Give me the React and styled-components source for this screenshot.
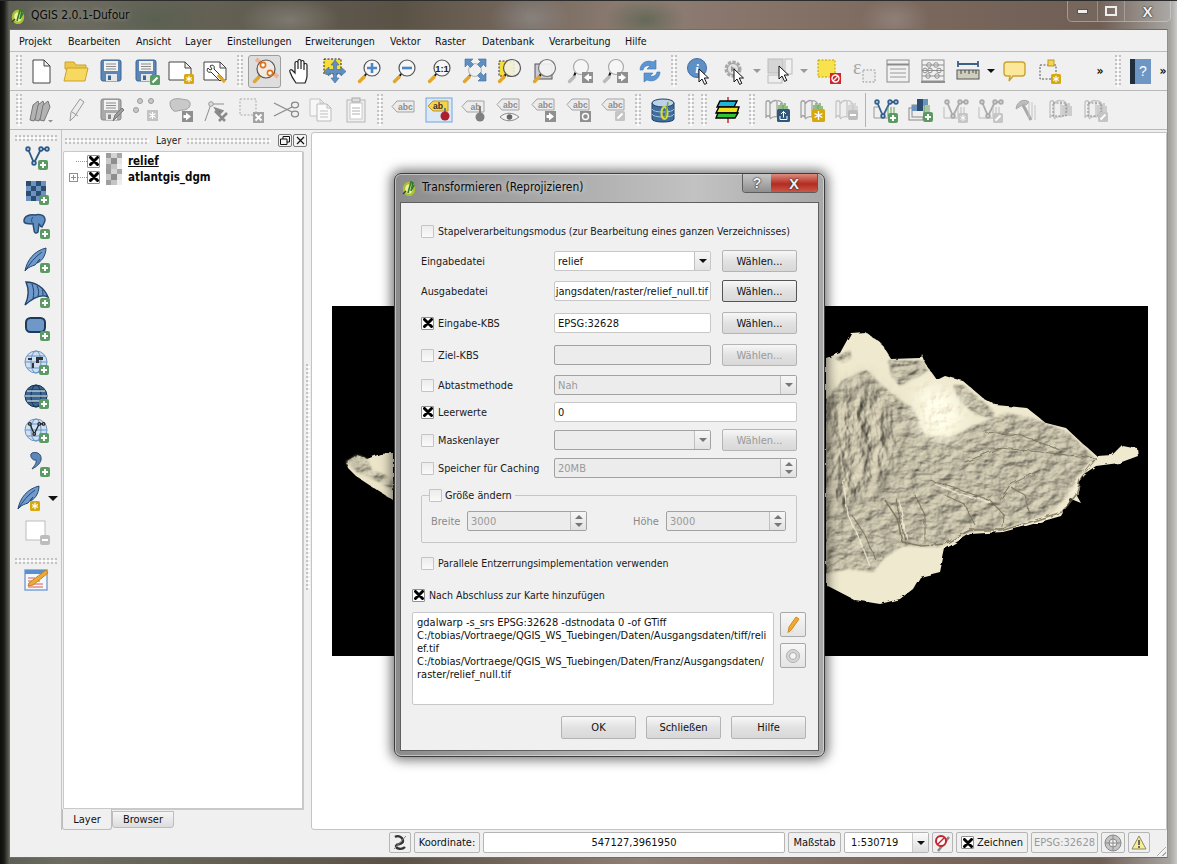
import React from "react";
import styled, { createGlobalStyle, css } from "styled-components";

const UI = '"DejaVu Sans Condensed", "Noto Sans", "Liberation Sans", sans-serif';

const Global = createGlobalStyle`
  html, body { margin: 0; padding: 0; background: #000; overflow: hidden; }
  * { box-sizing: border-box; }
`;

/* ---------- icon fragments ---------- */
const at = (x, y) => `translate(${x} ${y})`;
const Plus = ({ x = 18, y = 18 }) => (
  <g transform={at(x, y)}><rect width="10" height="10" rx="2" fill="#5c9a63" /><path d="M5 2v6M2 5h6" stroke="#fff" strokeWidth="2" /></g>
);
const Star = ({ x = 18, y = 18 }) => (
  <g transform={at(x, y)}><rect width="10" height="10" rx="1.5" fill="#d7a90e" /><path d="M5 1.8v6.4M2.2 3.4l5.600 3.2M2.2 6.6l5.600-3.2" stroke="#fff" strokeWidth="1.2" /></g>
);
const Minus = ({ x = 18, y = 18 }) => (
  <g transform={at(x, y)}><rect width="10" height="10" rx="2" fill="#bdbdbd" /><path d="M2 5h6" stroke="#fff" strokeWidth="2" /></g>
);
const Pen = ({ x = 18, y = 18, c = "#5c9a63" }) => (
  <g transform={at(x, y)}><rect width="10" height="10" rx="1.5" fill={c} /><path d="M2.5 7.5L7.5 2.5" stroke="#fff" strokeWidth="2" /></g>
);
const Arr = ({ x = 18, y = 18, left }) => (
  <g transform={at(x, y)}><rect width="11" height="11" fill="#8f8f8f" /><path d={left ? "M2 5.5L7 1.5v2.5h2.5v3H7v2.5z" : "M9 5.5L4 1.5v2.5H1.5v3H4v2.5z"} fill="#fff" /></g>
);
const Cursor = ({ x, y }) => (
  <path transform={at(x, y)} d="M0 0v13l3-3 2.6 5.4 2.2-1L5.3 9H9.5z" fill="#fff" stroke="#111" strokeWidth="1" />
);
const Lens = ({ cx = 16, cy = 11, r = 8, fill = "#f6f6f6", line = "#555", hand = "#e2a62c", children }) => (
  <g>
    <path d={`M${cx - r * 0.72} ${cy + r * 0.72}L7.5 20.5`} stroke="#111" strokeWidth="2" />
    <path d="M8 20L3.5 24.5" stroke={hand} strokeWidth="3.4" strokeLinecap="round" />
    <circle cx={cx} cy={cy} r={r} fill={fill} stroke={line} strokeWidth="1.2" />
    {children}
  </g>
);
const Tag = ({ t = "abc", y = 5 }) => (
  <g>
    <path d={`M7 ${y}h17v11H7l-5-5.5z`} fill="#ececec" stroke="#a3a3a3" />
    <text x="15.5" y={y + 8.6} fontFamily="'Liberation Sans',sans-serif" fontWeight="700" fontSize="8.6" textAnchor="middle" fill="#8d8d8d">{t}</text>
  </g>
);
const MapBase = ({ c = "#9f9f9f", g = "#5ea24f" }) => (
  <g fill="none">
    <path d="M3 7c0-3 4-3 4 0v15c0-3-4-3-4 0zM7 8c3-4 5-4 7-3v16c-3-1-5 0-7 2M14 5c2-1 4 0 6 3v8" stroke={c} strokeWidth="1.3" fill="#efefef" />
    <path d="M16 20V9M18 20V7M20 20V9M22 20V7M24 20V10" stroke={g} strokeWidth="1.3" />
  </g>
);
const Feather = ({ c = "#6f9acb", l = "#244a73" }) => (
  <g><path d="M3 25C5 14 12 5 24 2c0 8-5 14-9 15l3-4-5 6c-3 1-6 2-8 4z" fill={c} stroke={l} strokeWidth="1" /><path d="M3 25C8 17 13 11 20 6" stroke={l} strokeWidth="1" fill="none" /></g>
);
const Globe = ({ c = "#cfe0f2", l = "#6d95c4" }) => (
  <g fill="none" stroke={l}><circle cx="12" cy="12" r="11" fill={c} /><ellipse cx="12" cy="12" rx="5" ry="11" /><path d="M1 12h22M3 6h18M3 18h18" /></g>
);
const Floppy = ({ c = "#5b87b8", l = "#3c6690" }) => (
  <g>
    <rect x="4" y="3" width="20" height="21" rx="2" fill={c} stroke={l} />
    <rect x="7" y="4" width="14" height="10" fill="#f2f2f2" />
    <path d="M9 7h10M9 9.5h10M9 12h10" stroke="#8a8a8a" />
    <rect x="9" y="17" width="11" height="7" fill="#e6e6e6" /><rect x="11" y="18.5" width="3" height="4.5" fill={l} />
  </g>
);
const Doc = ({ x = 5, y = 3, w = 18, h = 22, f = 6, fill = "#fff", line = "#444" }) => (
  <path d={`M${x} ${y}h${w - f}l${f} ${f}v${h - f}h-${w}z M${x + w - f} ${y}v${f}h${f}`} fill={fill} stroke={line} />
);
const Vee = ({ c = "#2e5a87" }) => (
  <g fill="none" stroke={c} strokeWidth="1.8"><path d="M4 4l6 14L17 4h6" /><circle cx="4" cy="4" r="1.8" fill="#cfdff0" /><circle cx="17" cy="4" r="1.8" fill="#cfdff0" /><circle cx="23" cy="4" r="1.8" fill="#cfdff0" /><circle cx="10" cy="18" r="1.8" fill="#cfdff0" /></g>
);
const Check = () => (
  <g>
    {[[0,0,"#2b4d72"],[5,0,"#6c93c0"],[10,0,"#2b4d72"],[15,0,"#6c93c0"],[0,5,"#6c93c0"],[5,5,"#2b4d72"],[10,5,"#6c93c0"],[15,5,"#2b4d72"],[0,10,"#2b4d72"],[5,10,"#6c93c0"],[10,10,"#2b4d72"],[15,10,"#6c93c0"],[0,15,"#6c93c0"],[5,15,"#2b4d72"],[10,15,"#6c93c0"]].map(([x,y,c],i)=>(
      <rect key={i} x={x+4} y={y+3} width="5" height="5" fill={c} />
    ))}
  </g>
);
const Dash = ({ x = 4, y = 4, w = 15, h = 15, fill = "#ededed", line = "#999" }) => (
  <rect x={x} y={y} width={w} height={h} fill={fill} stroke={line} strokeDasharray="2 1.5" />
);

const icons = {
  new: <Doc x={6} y={3} w={17} h={23} />,
  open: <g><path d="M3 8V5h9l2 3h10v4H3z" fill="#eec64a" stroke="#c9a32f" /><path d="M5 11h21l-3 13H2z" fill="#f7d95f" stroke="#c9a32f" /></g>,
  save: <Floppy />,
  saveas: <g><Floppy /><Pen x={18} y={18} /></g>,
  newprint: <g><Doc x={2} y={5} w={22} h={18} /><Star x={17} y={17} /></g>,
  composer: <g><Doc x={2} y={5} w={22} h={18} /><path d="M8 9c3-2 5 0 4 3l9 9-3 3-9-9c-3 1-5-1-3-4l2 2 2-1z" fill="#fff" stroke="#333" /><path d="M16 18l7 7" stroke="#e2a62c" strokeWidth="3.2" /></g>,
  selzoom: <g><path d="M16 11L5 2M16 11l11 9" stroke="#eeb491" strokeWidth="4" /><Lens cx={15} cy={12} r={9} fill="#f2e9e3" /><circle cx="12" cy="8" r="2.6" fill="#fff" stroke="#e2731c" strokeWidth="1.6" /><circle cx="19" cy="16" r="2.6" fill="#fff" stroke="#e2731c" strokeWidth="1.6" /></g>,
  hand: <path d="M10 26C7 22 5 18 4 15c-1-2 1-3 2-2l3 3V6c0-2 3-2 3 0v6V4c0-2 3-2 3 0v8V5c0-2 3-2 3 0v8V8c0-2 3-2 3 0v11c0 3-1 4-2 7z" fill="#fff" stroke="#222" strokeWidth="1.2" />,
  pan: <g><Dash x={3} y={2} w={17} h={15} fill="#f6dd3a" line="#222" /><path d="M14 3l4 5h-2.500v4.500H20V10l5 4.500-5 4.500v-2.500h-4.500V21H18l-4 5-4-5h2.500v-4.500H8V19l-5-4.500L8 10v2.500h4.500V8H10z" fill="#5f8fc2" stroke="#3e6a9b" strokeWidth=".6" /></g>,
  zoomin: <Lens><path d="M16 6v10M11 11h10" stroke="#4c86c4" strokeWidth="2.6" /></Lens>,
  zoomout: <Lens><path d="M11 11h10" stroke="#4c86c4" strokeWidth="2.6" /></Lens>,
  zoom11: <Lens><text x="16" y="14.5" fontSize="9.5" fontWeight="700" textAnchor="middle" fill="#222" fontFamily="'Liberation Sans',sans-serif">1:1</text></Lens>,
  zoomfull: <g><Lens cx={14} cy={13} r={6.5} fill="#f0f0f0" line="#bbb" /><path d="M4 2h8L9.500 4.500l3 3-3 3-3-3L4 10zM25 2v8l-2.500-2.500-3 3-3-3 3-3L17 2zM25 24h-8l2.500-2.500-3-3 3-3 3 3L25 16z" fill="#5f8fc2" stroke="#3e6a9b" strokeWidth=".6" /></g>,
  zoomsel: <g><Dash x={3} y={4} w={15} h={15} fill="#f6dd3a" line="#333" /><Lens cx={16} cy={11} r={8.5} fill="rgba(240,240,230,.88)" /></g>,
  zoomlayer: <g><rect x="4" y="7" width="17" height="15" fill="#cfc9d6" stroke="#555" /><Lens cx={16} cy={11} r={8.5} fill="rgba(244,244,244,.9)" line="#777" /></g>,
  zoomlast: <g><Lens cx={15} cy={10} r={7.5} fill="#f6f6f6" line="#aaa" hand="#bbb" /><Arr x={16} y={15} left /></g>,
  zoomnext: <g><Lens cx={15} cy={10} r={7.5} fill="#f6f6f6" line="#aaa" hand="#bbb" /><Arr x={16} y={15} /></g>,
  refresh: <g fill="#5b96d3" stroke="#3f77b3" strokeWidth=".6"><path d="M4 13c0-6 6-11 13-8l3-2v9h-9l3-3c-3-1-6 0-7 4z" /><path d="M24 15c0 6-6 11-13 8l-3 2v-9h9l-3 3c3 1 6 0 7-4z" /></g>,
  identify: <g><circle cx="12" cy="11" r="9.500" fill="#5e8fc5" stroke="#3f6c9f" /><text x="12" y="16" fontSize="13" fontStyle="italic" fontWeight="700" fill="#fff" textAnchor="middle" fontFamily="'Liberation Serif',serif">i</text><Cursor x={14} y={12} /></g>,
  gear: <g><circle cx="13" cy="12" r="7" fill="#d8d8d8" stroke="#a8a8a8" strokeWidth="3" strokeDasharray="3.200 1.400" /><circle cx="13" cy="12" r="5.500" fill="#e3e3e3" stroke="#9e9e9e" /><path d="M11 9l5 3-5 3z" fill="#9a9a9a" /><Cursor x={14} y={12} /></g>,
  select: <g><rect x="2" y="2" width="15" height="14" fill="#d5d5d5" stroke="#bbb" /><rect x="19" y="2" width="7" height="15" fill="#f0f0f0" stroke="#bbb" /><rect x="2" y="18" width="14" height="8" fill="#eee" stroke="#bbb" /><Cursor x={13} y={9} /></g>,
  deselect: <g><Dash x={4} y={3} w={17} h={17} fill="#f8e34f" line="#b69a25" /><rect x="16" y="16" width="11" height="11" fill="#d0262b" /><circle cx="21.500" cy="21.500" r="3.500" fill="none" stroke="#fff" strokeWidth="1.400" /><path d="M19 24l5-5" stroke="#fff" strokeWidth="1.300" /></g>,
  eps: <g><text x="4" y="17" fontSize="20" fill="#a5a5a5" fontFamily="'Liberation Serif',serif">ε</text><Dash x={14} y={13} w={12} h={12} /></g>,
  table: <g><rect x="3" y="3" width="22" height="22" fill="#f1f1f1" stroke="#8b8b8b" /><path d="M3 7.500h22" stroke="#8b8b8b" strokeWidth="2" /><path d="M6 12h16M6 16h16M6 20h16" stroke="#9a9a9a" /></g>,
  abacus: <g fill="none" stroke="#8f8f8f"><rect x="3" y="3" width="22" height="21" fill="#f1f1f1" /><path d="M3 8h22M3 13.500h22M3 19h22" /><circle cx="10" cy="8" r="2.300" /><circle cx="17" cy="8" r="2.300" /><circle cx="6" cy="13.500" r="2.300" /><circle cx="11" cy="13.500" r="2.300" /><circle cx="20" cy="13.500" r="2.300" /><circle cx="9" cy="19" r="2.300" /><circle cx="18" cy="19" r="2.300" /><path d="M2 25h24" strokeWidth="2" /></g>,
  ruler: <g><path d="M4 7h20M4 4v6M24 4v6" stroke="#3d6184" strokeWidth="1.800" /><rect x="3" y="13" width="22" height="9" fill="#cfcdbf" stroke="#555" /><path d="M7 13v4M11 13v3M15 13v4M19 13v3M22 13v4" stroke="#444" /></g>,
  tip: <path d="M7 5h15c2 0 3 1 3 3v8c0 2-1 3-3 3H13l-4 5 1-5H7c-2 0-3-1-3-3V8c0-2 1-3 3-3z" fill="#fbe89a" stroke="#c9a32f" strokeWidth="1.400" />,
  annot: <g><Dash x={5} y={8} w={16} h={14} fill="none" line="#555" /><rect x="13" y="3" width="6" height="6" fill="#f5d34a" stroke="#b89a2a" /><Star x={16} y={17} /></g>,
  help: <g><rect x="4" y="2" width="21" height="25" fill="#6d96c5" /><rect x="4" y="2" width="5" height="25" fill="#1f2f40" /><text x="17" y="19" fontSize="14" fill="#fff" textAnchor="middle" fontFamily="'Liberation Sans',sans-serif">?</text></g>,

  pencils: <g stroke="#777" fill="#b3b3b3"><path d="M3 24L6 9l5-4 2 6-6 14z" /><path d="M8 24L11 9l5-4 2 6-6 14z" /><path d="M13 24l3-15 5-4 2 6-6 14z" /><path d="M21 24h5l-2.500 2.500z" stroke="none" fill="#8f8f8f" /></g>,
  pencil: <g stroke="#9a9a9a" fill="#ececec"><path d="M8 25l1-9L18 3l4 3-9 14z" /><path d="M10 16l6 4" fill="none" /></g>,
  savegray: <g><Floppy c="#aaa" l="#888" /><path d="M16 25l2-6 7-7 2 2-7 7z" fill="#9e9e9e" stroke="#777" /></g>,
  points: <g><circle cx="8" cy="5" r="2.500" fill="#c9c9c9" stroke="#999" /><circle cx="19" cy="5" r="2.500" fill="#c9c9c9" stroke="#999" /><circle cx="4" cy="14" r="2.500" fill="#c9c9c9" stroke="#999" /><rect x="15" y="14" width="11" height="11" fill="#c3c3c3" /><path d="M20.500 16v7M17.500 17.500l6 4M17.500 21.500l6-4" stroke="#fff" strokeWidth="1.200" /></g>,
  shape: <g><path d="M3 7c0-4 7-5 11-4s8 0 9 4-3 7-7 7-7 2-9 1-4-4-4-8z" fill="#c9c9c9" stroke="#9f9f9f" /><Arr x={15} y={15} /></g>,
  nodetool: <g><path d="M3 25L9 8M9 8h13" stroke="#8f8f8f" /><circle cx="9" cy="8" r="2.300" fill="#ddd" stroke="#999" /><path d="M13 15l10 10M17 25l8-8M14 13l6 2-3 3z" stroke="#8a8a8a" strokeWidth="2.500" /></g>,
  dashx: <g><Dash x={3} y={3} w={16} h={16} fill="#eee" line="#aaa" /><rect x="16" y="16" width="11" height="11" fill="#a3a3a3" /><path d="M18.500 18.500l6 6M24.500 18.500l-6 6" stroke="#fff" strokeWidth="2" /></g>,
  scissors: <g fill="none" stroke="#8a8a8a" strokeWidth="1.300"><path d="M2 7l18 9M2 20L20 11" /><ellipse cx="23" cy="9" rx="3.500" ry="2.800" /><ellipse cx="23" cy="18" rx="3.500" ry="2.800" /></g>,
  copy: <g><Doc x={3} y={3} w={14} h={17} f={4} fill="#f7f7f7" line="#c4c4c4" /><Doc x={10} y={8} w={14} h={17} f={4} fill="#fafafa" line="#bbb" /><path d="M13 15h8M13 18h8M13 21h8" stroke="#c0c0c0" /></g>,
  clip: <g><rect x="5" y="4" width="18" height="22" fill="#eee" stroke="#b5b5b5" /><rect x="8" y="7" width="12" height="16" fill="#fff" stroke="#c8c8c8" /><rect x="10" y="2" width="8" height="4" fill="#ddd" stroke="#aaa" /><path d="M10 12h8M10 15h8M10 18h8" stroke="#b0b0b0" /></g>,
  abc: <Tag />,
  abpin: <g><rect x="1" y="2" width="26" height="24" fill="#dce8f5" stroke="#6ea6e0" /><path d="M8 5h15v10H8l-5-5z" fill="#f6d44a" stroke="#b89a2a" /><text x="13" y="13" fontSize="8.600" fontWeight="700" textAnchor="middle" fill="#333" fontFamily="'Liberation Sans',sans-serif">ab</text><path d="M20 12v6" stroke="#777" strokeWidth="2" /><circle cx="20" cy="20" r="4.500" fill="#ad1f2c" /></g>,
  abgray: <g><Tag t="ab" /><path d="M20 10v8" stroke="#777" strokeWidth="1.800" /><circle cx="20" cy="21" r="4.500" fill="#7f7f7f" /></g>,
  abceye: <g><Tag y={3} /><path d="M5 21c5-5 13-5 19 0-6 5-14 5-19 0z" fill="#f4f4f4" stroke="#888" /><circle cx="14.500" cy="21" r="2.800" fill="#666" /></g>,
  abcarrow: <g><Tag y={3} /><Arr x={15} y={15} /></g>,
  abcrot: <g><Tag y={3} /><rect x="15" y="15" width="11" height="11" fill="#8f8f8f" /><circle cx="20.500" cy="20.500" r="3" fill="none" stroke="#fff" strokeWidth="1.400" /></g>,
  abcpen: <g><Tag y={3} /><Pen x={15} y={15} c="#c4c4c4" /></g>,
  db: <g><path d="M3 7v16c0 4 22 4 22 0V7z" fill="#3f6d9f" stroke="#1f3f63" /><ellipse cx="14" cy="7" rx="11" ry="4" fill="#bcd2e8" stroke="#1f3f63" /><path d="M3 13c0 4 22 4 22 0M3 18c0 4 22 4 22 0" fill="none" stroke="#a8c3de" /><ellipse cx="15.500" cy="17" rx="3" ry="6" fill="none" stroke="#d7d83a" strokeWidth="2.200" /><path d="M16 22l3-16" stroke="#7fa82f" strokeWidth="1.600" /></g>,
  stack: <g><path d="M14 1v26" stroke="#d6262a" strokeWidth="1.500" /><path d="M6 5h17l-3 6H3z" fill="#1fb5d6" stroke="#000" strokeWidth="1.400" /><path d="M5 11h20l-2 6H2z" fill="#eee21f" stroke="#000" strokeWidth="1.400" /><path d="M4 17h20l-3 5H2z" fill="#2fc23a" stroke="#000" strokeWidth="1.400" /></g>,
  mapup: <g><MapBase c="#a4a4a4" /><rect x="14" y="13" width="13" height="13" rx="1.500" fill="#30587d" /><path d="M20.500 15.500v6M18 18l2.500-2.500L23 18M17 20v3.500h7V20" stroke="#fff" fill="none" /></g>,
  mapstar: <g><MapBase c="#a4a4a4" /><rect x="14" y="13" width="13" height="13" rx="1.500" fill="#d7a90e" /><path d="M20.500 15v9M16.500 17.500l8 4M16.500 21.500l8-4" stroke="#fff" strokeWidth="1.300" /></g>,
  mapminus: <g><MapBase c="#c6c6c6" g="#c8c8c8" /><Minus x={15} y={14} /></g>,
  mapplus: <g transform="translate(1 2)"><path d="M1 20V9h4" stroke="#999" fill="none" /><path d="M1 20h14" stroke="#999" /><Vee c="#38628c" /><path d="M15 9V19M18 9V19M21 9V19" stroke="#5ea24f" /><Plus x={15} y={15} /></g>,
  rasterplus: <g><rect x="2" y="12" width="14" height="12" fill="#f0f0f0" stroke="#888" /><rect x="5" y="9" width="13" height="12" fill="#eee" stroke="#888" /><rect x="10" y="3" width="6" height="6" fill="#2b4d72" /><rect x="16" y="3" width="5" height="6" fill="#6c93c0" /><rect x="5" y="9" width="5" height="6" fill="#6c93c0" /><rect x="10" y="9" width="6" height="6" fill="#2b4d72" /><path d="M17 9v11M20 9v11M22 9v11" stroke="#5ea24f" /><Plus x={16} y={16} /></g>,
  nodegray: <g transform="translate(1 2)"><path d="M1 20V9M1 20h14" stroke="#bbb" /><Vee c="#aaa" /><path d="M15 9V19M18 9V19M21 9V19" stroke="#bbb" /><rect x="15" y="15" width="10" height="10" rx="1.500" fill="#c6c6c6" /><path d="M20 17v6M17.500 18.500l5 3M17.500 21.500l5-3" stroke="#fff" /></g>,
  penmap: <g transform="translate(1 2)"><path d="M1 20V9M1 20h14" stroke="#bbb" /><Vee c="#aaa" /><path d="M15 9V19M18 9V19M21 9V19" stroke="#bbb" /><Pen x={15} y={15} c="#c6c6c6" /></g>,
  hammer: <g stroke="#a8a8a8" fill="none"><path d="M5 9c3-5 8-6 12-3l-3 3-2-1-8 5z" fill="#bdbdbd" /><path d="M11 9l8 15" strokeWidth="3" /><path d="M17 6v16M20 6v16M23 9v15" stroke="#c4c4c4" /></g>,
  mapdash: <g><MapBase c="#c2c2c2" g="#bbb" /><Dash x={6} y={7} w={13} h={13} fill="none" line="#888" /></g>,
  mappen: <g><MapBase c="#c2c2c2" g="#bbb" /><Dash x={6} y={7} w={13} h={13} fill="none" line="#888" /><Pen x={16} y={16} c="#c4c4c4" /></g>,

  lv: <g transform="translate(2 1)"><Vee /><Plus x={14} y={15} /></g>,
  lr: <g><Check /><Plus x={17} y={17} /></g>,
  lpg: <g><path d="M2 9C2 4 8 2 13 3c3-1 10-1 10 5 0 3-2 4-3 7-2 0-2-3-3-3l-1 8c-2 2-4 1-4-2l-1-6c-5 0-9 0-9-3z" fill="#5f8fc2" stroke="#2b4d72" strokeWidth="1.500" /><path d="M11 5c-2 2-2 6 1 7" stroke="#2b4d72" fill="none" /><Plus x={18} y={17} /></g>,
  lfeather: <g><Feather /><Plus x={18} y={17} /></g>,
  lsail: <g><path d="M3 25C7 17 7 9 4 2c9 0 18 5 22 15-6-3-15 1-23 8z" fill="#6f9acb" stroke="#1f4268" strokeWidth="1.400" /><path d="M10 4c2 5 2 10 1 15M15 6c2 4 2 7 1 10M20 10c1 2 1 4 1 5" stroke="#1f4268" fill="none" /><Plus x={18} y={18} /></g>,
  lrect: <g><rect x="4" y="4" width="19" height="14" rx="4.500" fill="#6f97c8" stroke="#1c3a5c" strokeWidth="2" /><Plus x={18} y={17} /></g>,
  lwms: <g transform="translate(2 2)"><Globe /><path d="M4 8h4v2H4zM12 7h7v3h-4v3h-3zM8 13h2v5H8z" fill="#333" /><Plus x={15} y={15} /></g>,
  lwcs: <g transform="translate(2 2)"><Globe c="#3a6694" l="#17324f" /><path d="M1 12h22M3 7h18M3 17h18" stroke="#fff" /><Plus x={15} y={15} /></g>,
  lwfs: <g transform="translate(2 2)"><Globe /><g transform="translate(3 3) scale(.72)"><Vee c="#222" /></g><Plus x={15} y={15} /></g>,
  lcomma: <g><path d="M10 3c6-2 10 2 9 7-1 4-5 7-9 9 2-3 5-6 4-9-4 1-7-5-4-7z" fill="#5b87ba" stroke="#2b4d72" /><Plus x={18} y={17} /></g>,
  lnew: <g><Feather /><Star x={15} y={17} /></g>,
  lrem: <g><rect x="4" y="3" width="19" height="19" fill="#fff" stroke="#bcbcbc" /><Minus x={18} y={17} /></g>,
  notes: <g><rect x="3" y="5" width="22" height="20" fill="#f4f7fb" stroke="#7ea4d2" strokeWidth="1.500" /><rect x="3" y="5" width="22" height="4" fill="#5b8fd0" /><path d="M6 13h7M6 16h12M6 19h15M6 22h15" stroke="#d65b5b" /><path d="M7 18L24 5l2 3-15 12-5 1z" fill="#eea936" stroke="#c78419" /></g>,
};

/* ---------- chrome ---------- */
const Window = styled.div`
  position: relative;
  width: 1177px;
  height: 864px;
  overflow: hidden;
  display: flex;
  flex-direction: column;
  background:
    radial-gradient(ellipse 60px 30px at 155px 20px, rgba(70, 90, 70, .4), transparent),
    radial-gradient(ellipse 50px 24px at 290px 20px, rgba(230, 230, 230, .22), transparent),
    radial-gradient(ellipse 40px 26px at 530px 18px, rgba(190, 210, 230, .22), transparent),
    radial-gradient(ellipse 40px 24px at 645px 20px, rgba(60, 85, 60, .5), transparent),
    radial-gradient(ellipse 34px 24px at 895px 20px, rgba(210, 210, 210, .22), transparent),
    linear-gradient(90deg, #0d0d0b 0, #1a1a17 4px, #5e5f55 9px, #6c6c60 60px, #5b5246 400px, #8f7e74 640px, #7c695e 900px, #6e5e54 1100px, #a7a4a0 1170px, #c9c9c9 1177px);
`;
const TitleBar = styled.header`
  height: 29px;
  flex: none;
  display: flex;
  align-items: flex-start;
  padding-left: 11px;
  border-top: 1px solid #2b2b2b;
`;
const LogoSvg = styled.svg`
  width: 15px;
  height: 16px;
  flex: none;
  margin-top: ${(p) => p.$mt || 7}px;
`;
const TitleText = styled.span`
  margin: 7px 0 0 5px;
  font: 12px ${UI};
  color: #0a0a0a;
  text-shadow: 0 0 5px rgba(255, 255, 255, .45);
`;
const CaptionGroup = styled.div`
  margin-left: auto;
  margin-right: 6px;
  display: flex;
  height: 21px;
  border: 1px solid rgba(230, 230, 230, .4);
  border-top: none;
  border-radius: 0 0 5px 5px;
  background: rgba(255, 255, 255, .05);
`;
const CaptionBtn = styled.span`
  width: ${(p) => p.$w}px;
  display: flex;
  align-items: center;
  justify-content: center;
  border-left: ${(p) => (p.$first ? "none" : "1px solid rgba(230,230,230,.32)")};
`;
const Client = styled.div`
  flex: 1;
  min-height: 0;
  margin: 0 9px 6px 9px;
  display: flex;
  flex-direction: column;
  background: #f0f0f0;
  border: 1px solid #6d6d6d;
  border-right-color: #8f8f8f;
`;
const MenuBar = styled.nav`
  height: 22px;
  flex: none;
  display: flex;
  align-items: center;
  padding-top: 1px;
  border-bottom: 1px solid #bdbdbd;
`;
const MenuItem = styled.span`
  font: 10.6px ${UI};
  color: #111;
  margin-left: ${(p) => p.$x}px;
  width: ${(p) => p.$w}px;
  flex: none;
`;
const Toolbar = styled.div`
  height: 39px;
  flex: none;
  display: flex;
  align-items: center;
  padding-left: 4px;
  border-bottom: 1px solid #b9b9b9;
`;
const Slot = styled.span`
  width: 35px;
  height: 38px;
  flex: none;
  display: flex;
  align-items: center;
  justify-content: center;
`;
const ActiveBtn = styled.span`
  width: 33px;
  height: 33px;
  display: flex;
  align-items: center;
  justify-content: center;
  background: #dedede;
  border: 1px solid #9d9d9d;
  border-radius: 3px;
`;
const IconSvg = styled.svg`
  width: 28px;
  height: 28px;
  flex: none;
  display: block;
`;
const dots = css`
  background-image: radial-gradient(circle at 1px 1px, #c4c4c4 1px, transparent 1.3px), radial-gradient(circle at 3px 3px, #fff 1px, transparent 1.3px);
  background-size: 4px 4px;
`;
const GripSlot = styled.span`
  width: ${(p) => p.$w}px;
  flex: none;
  display: flex;
  justify-content: center;
`;
const GripV = styled.i`
  display: block;
  width: 6px;
  height: 32px;
  ${dots}
`;
const Gap = styled.span`
  width: ${(p) => p.$w}px;
  flex: none;
`;
const DropSlot = styled.span`
  width: ${(p) => p.$w}px;
  flex: none;
  display: flex;
  justify-content: center;
`;
const Tri = styled.i`
  width: 0;
  height: 0;
  display: block;
  border-left: ${(p) => p.$s || 4}px solid transparent;
  border-right: ${(p) => p.$s || 4}px solid transparent;
  border-top: ${(p) => p.$s || 4}px solid ${(p) => p.$c || "#111"};
`;
const More = styled.span`
  width: 12px;
  flex: none;
  text-align: center;
  font: 700 12px ${UI};
  color: #111;
`;
const VLine = styled.span`
  width: 3px;
  height: 34px;
  flex: none;
  border-left: 1px solid #b3b3b3;
  margin-left: 1px;
`;

const Main = styled.div`
  flex: 1;
  min-height: 0;
  display: flex;
`;
const SideBar = styled.aside`
  width: 52px;
  flex: none;
  padding-top: 5px;
  display: flex;
  flex-direction: column;
  border-right: 1px solid #c4c4c4;
`;
const GripH = styled.i`
  display: block;
  height: 6px;
  width: 42px;
  margin: ${(p) => p.$m || "0 auto"};
  flex: none;
  ${dots}
`;
const SideSlot = styled.span`
  height: ${(p) => p.$h || 34}px;
  flex: none;
  display: flex;
  align-items: center;
  justify-content: ${(p) => (p.$drop ? "flex-start" : "center")};
  padding-left: ${(p) => (p.$drop ? "5px" : "0")};
  gap: 5px;
`;
const Dock = styled.section`
  width: 242px;
  flex: none;
  display: flex;
  flex-direction: column;
`;
const DockHead = styled.div`
  height: 21px;
  flex: none;
  display: flex;
  align-items: center;
  padding: 0 0 0 3px;
  gap: 7px;
`;
const GripFill = styled.i`
  display: block;
  height: 6px;
  width: ${(p) => p.$w}px;
  flex: none;
  ${dots}
`;
const DockTitle = styled.span`
  font: 10px ${UI};
  color: #222;
  width: 24px;
  text-align: center;
  flex: none;
`;
const DockBtn = styled.span`
  width: 14px;
  height: 13px;
  flex: none;
  margin-left: ${(p) => p.$ml ?? -6}px;
  border: 1px solid #777;
  border-radius: 2px;
  display: flex;
  align-items: center;
  justify-content: center;
  background: #f4f4f4;
`;
const Tree = styled.div`
  flex: 1;
  min-height: 0;
  margin-left: 1px;
  background: #fff;
  border: 1px solid #c9c9c9;
  border-width: 1px 2px 2px 1px;
  border-radius: 2px;
  padding-top: 1px;
`;
const TreeRow = styled.div`
  height: 16px;
  display: flex;
  align-items: center;
  padding-left: 5px;
`;
const TreeGuide = styled.span`
  width: 18px;
  flex: none;
  display: flex;
  align-items: center;
  color: #999;
`;
const Expander = styled.span`
  width: 9px;
  height: 9px;
  flex: none;
  border: 1px solid #8f8f8f;
  background: linear-gradient(#8f8f8f, #8f8f8f) center/5px 1px no-repeat, linear-gradient(#8f8f8f, #8f8f8f) center/1px 5px no-repeat, #fff;
`;
const Dotted = styled.span`
  flex: 1;
  border-top: 1px dotted #999;
`;
const TreeLabel = styled.span`
  font: 700 11.5px ${UI};
  color: #0a0a0a;
  margin-left: 6px;
  text-decoration: ${(p) => (p.$u ? "underline" : "none")};
`;
const RasterSwatch = styled.svg`
  width: 16px;
  height: 16px;
  flex: none;
  margin-left: 6px;
`;
const Tabs = styled.div`
  height: 21px;
  flex: none;
  display: flex;
  align-items: flex-start;
  border-top: 1px solid #c9c9c9;
  margin-top: -1px;
`;
const Tab = styled.span`
  font: 11px ${UI};
  color: #111;
  text-align: center;
  height: ${(p) => (p.$on ? 21 : 17)}px;
  width: ${(p) => (p.$on ? 50 : 62)}px;
  line-height: ${(p) => (p.$on ? 22 : 15)}px;
  margin-top: ${(p) => (p.$on ? -1 : 1)}px;
  background: ${(p) => (p.$on ? "#f0f0f0" : "linear-gradient(#f6f6f6, #dcdcdc)")};
  border: 1px solid #bdbdbd;
  border-top: ${(p) => (p.$on ? "none" : "1px solid #bdbdbd")};
  border-radius: 0 0 3px 3px;
`;
const Splitter = styled.div`
  width: 7px;
  flex: none;
  display: flex;
  align-items: flex-start;
  justify-content: center;
  padding-top: 234px;
`;
const SplitDots = styled.i`
  display: block;
  width: 4px;
  height: 226px;
  ${dots}
`;
const MapCanvas = styled.main`
  flex: 1;
  min-width: 0;
  margin-top: 2px;
  background: #fff;
  border: 1px solid #c4c4c4;
  border-radius: 3px 0 0 3px;
  display: flex;
  align-items: center;
  justify-content: center;
`;
const Raster = styled.div`
  width: 816px;
  height: 350px;
  margin-left: 1px;
  background: #000;
  flex: none;
`;
const RasterSvg = styled.svg`
  width: 816px;
  height: 350px;
  display: block;
`;
const StatusBar = styled.footer`
  height: 27px;
  flex: none;
  display: flex;
  justify-content: flex-end;
  align-items: flex-start;
  gap: 3px;
  padding: 2px 17px 0 0;
  position: relative;
`;
const Stat = styled.span`
  width: ${(p) => p.$w}px;
  height: 21px;
  flex: none;
  display: flex;
  align-items: center;
  justify-content: ${(p) => p.$j || "center"};
  gap: 3px;
  font: 11px ${UI};
  color: ${(p) => p.$c || "#111"};
  background: ${(p) => p.$bg || "#f0f0f0"};
  border: 1px solid #b5b5b5;
  border-radius: 2px;
  padding: ${(p) => p.$p || 0};
`;
const ComboTail = styled.span`
  margin-left: auto;
  width: 16px;
  height: 100%;
  display: flex;
  align-items: center;
  justify-content: center;
  border-left: 1px solid #c8c8c8;
  background: linear-gradient(#fbfbfb, #dedede);
`;
const ResizeGrip = styled.span`
  position: absolute;
  right: 1px;
  bottom: 1px;
  width: 12px;
  height: 12px;
  background: repeating-linear-gradient(135deg, transparent 0 2px, #a8a8a8 2px 3px, #fff 3px 4px);
  clip-path: polygon(100% 0, 100% 100%, 0 100%);
`;
const CaptionGlyph = styled.span`
  font: 700 ${(p) => p.$s || 13}px "Liberation Sans", sans-serif;
  color: #f2f2f2;
  text-shadow: 0 0 2px #222, 0 0 1px #222;
`;

/* ---------- dialog ---------- */
const Dialog = styled.div`
  position: absolute;
  left: 394px;
  top: 173px;
  width: 431px;
  height: 584px;
  display: flex;
  flex-direction: column;
  border: 1px solid #3d3d3d;
  border-radius: 7px;
  background: linear-gradient(90deg, #8b8b8b 0, #a9a9a9 35%, #c2c2c2 70%, #a8a8a8 100%);
  box-shadow: 0 0 12px 3px rgba(0, 0, 0, .55), inset 0 0 0 1px rgba(255, 255, 255, .45);
`;
const DialogTitle = styled.div`
  height: 28px;
  flex: none;
  display: flex;
  align-items: flex-start;
  padding-left: 7px;
`;
const DialogTitleText = styled.span`
  margin: 6px 0 0 5px;
  font: 11.9px ${UI};
  color: #0a0a0a;
  text-shadow: 0 0 6px rgba(255, 255, 255, .9);
`;
const DlgButtons = styled.div`
  margin-left: auto;
  margin-right: 6px;
  display: flex;
  height: 19px;
  border: 1px solid rgba(70, 70, 70, .8);
  border-top: none;
  border-radius: 0 0 4px 4px;
  overflow: hidden;
`;
const DlgBtn = styled.span`
  width: ${(p) => p.$w}px;
  display: flex;
  align-items: center;
  justify-content: center;
  background: ${(p) => p.$bg};
`;
const DialogBody = styled.div`
  flex: 1;
  min-height: 0;
  margin: 0 5px 5px 5px;
  background: #f0f0f0;
  border: 1px solid #5f5f5f;
  padding-top: 17px;
  display: flex;
  flex-direction: column;
`;
const Form = styled.div`
  padding: 0 21px 0 20px;
`;
const Row = styled.div`
  display: grid;
  grid-template-columns: 133px 1fr;
  align-items: center;
  height: 22px;
  margin-top: ${(p) => p.$mt || 0}px;
  font: 10.8px ${UI};
  color: #1a1a1a;
`;
const FullRow = styled.div`
  display: flex;
  align-items: center;
  gap: 4px;
  height: 22px;
  white-space: nowrap;
  margin-top: ${(p) => p.$mt || 0}px;
  font: 10.5px ${UI};
  color: #1a1a1a;
`;
const CheckLabel = styled.label`
  display: flex;
  align-items: center;
  gap: 4px;
`;
const CheckBox = styled.span`
  width: 13px;
  height: 13px;
  flex: none;
  border: 1px solid ${(p) => (p.$on ? "#8f8f8f" : "#c4c4c4")};
  border-radius: 1px;
  background: ${(p) => (p.$on ? "#fff" : "linear-gradient(#ececec, #fafafa)")};
  display: flex;
  align-items: center;
  justify-content: center;
`;
const Cell = styled.div`
  display: flex;
  align-items: center;
  gap: 11px;
`;
const Field = styled.div`
  flex: 1;
  min-width: 0;
  height: 20px;
  display: flex;
  align-items: center;
  overflow: hidden;
  padding-left: ${(p) => p.$pl ?? 3}px;
  font: 11px ${UI};
  white-space: nowrap;
  color: ${(p) => (p.$off ? "#9a9a9a" : "#111")};
  background: ${(p) => (p.$off ? "#ececec" : "#fff")};
  border: 1px solid ${(p) => (p.$off ? "#a2a2a2" : "#c8c8c8")};
  border-radius: 2px;
`;
const RightText = styled.span`
  margin-left: auto;
  padding-right: 2px;
`;
const ArrowBox = styled.span`
  margin-left: auto;
  width: 16px;
  height: 100%;
  flex: none;
  display: flex;
  align-items: center;
  justify-content: center;
  border-left: 1px solid #c0c0c0;
  background: linear-gradient(#f7f7f7, #e2e2e2);
`;
const SpinBox = styled.span`
  margin-left: auto;
  width: 16px;
  height: 100%;
  flex: none;
  display: flex;
  flex-direction: column;
  align-items: center;
  justify-content: space-evenly;
  border-left: 1px solid #c0c0c0;
  background: linear-gradient(#f7f7f7, #e2e2e2);
`;
const TriUp = styled(Tri)`
  transform: rotate(180deg);
`;
const PushBtn = styled.button`
  width: ${(p) => p.$w || 75}px;
  height: ${(p) => p.$h || 22}px;
  flex: none;
  padding: 0;
  display: flex;
  align-items: center;
  justify-content: center;
  font: 11px ${UI};
  color: ${(p) => (p.$off ? "#9a9a9a" : "#111")};
  background: linear-gradient(#f7f7f7, #e2e2e2 50%, #d8d8d8);
  border: 1px solid ${(p) => (p.$def ? "#555" : "#b4b4b4")};
  border-radius: 2px;
`;
const Group = styled.fieldset`
  margin: 10px 0 0;
  padding: 0 10px 0 9px;
  height: 54px;
  display: block;
  border: 1px solid #c6c6c6;
  border-radius: 2px;
`;
const Legend = styled.legend`
  display: flex;
  align-items: center;
  gap: 3px;
  padding: 0 3px 0 0;
  margin-left: -2px;
  font: 10.8px ${UI};
  color: #1a1a1a;
  height: 13px;
`;
const GroupRow = styled.div`
  display: flex;
  align-items: center;
  height: 20px;
  margin-top: 9px;
  font: 11px ${UI};
  color: #8a8a8a;
`;
const GroupLabel = styled.span`
  width: ${(p) => p.$w}px;
  flex: none;
`;
const SmallSpin = styled(Field)`
  flex: none;
  width: 120px;
`;
const Lower = styled.div`
  padding: 0 12px 0 11px;
`;
const ConsoleRow = styled.div`
  margin-top: 6px;
  display: flex;
  gap: 6px;
`;
const Console = styled.div`
  width: 362px;
  height: 93px;
  flex: none;
  background: #fff;
  border: 1px solid #c8c8c8;
  border-radius: 2px;
  padding: 3px 0 0 4px;
  font: 11px/13px ${UI};
  color: #111;
  white-space: pre;
`;
const ConsoleSide = styled.div`
  display: flex;
  flex-direction: column;
  gap: 6px;
`;
const SideBtn = styled.span`
  width: 26px;
  height: 25px;
  display: flex;
  align-items: center;
  justify-content: center;
  background: linear-gradient(#f7f7f7, #e4e4e4);
  border: 1px solid #a8a8a8;
  border-radius: 2px;
`;
const BtnBar = styled.div`
  margin-top: 11px;
  display: flex;
  justify-content: flex-end;
  gap: 10px;
`;

/* ---------- small composites ---------- */
const Icon = ({ n }) => <IconSvg viewBox="0 0 28 28">{icons[n]}</IconSvg>;

const Logo = ({ mt }) => (
  <LogoSvg viewBox="0 0 15 16" $mt={mt}>
    <ellipse cx="7" cy="9" rx="5" ry="6" fill="#f2ef9c" stroke="#a9c234" strokeWidth="2.400" />
    <path d="M6 13l3-11 2 1-2 8 3-6" stroke="#2f7d2c" strokeWidth="1.600" fill="none" />
    <path d="M1 14l3-3" stroke="#3c3c20" strokeWidth="1.300" />
  </LogoSvg>
);
const XMark = () => (
  <svg width="10" height="10" viewBox="0 0 10 10"><path d="M1.500 1.500l7 7M8.500 1.500l-7 7" stroke="#000" strokeWidth="3" strokeLinecap="round" /></svg>
);
const Box = ({ on }) => <CheckBox $on={on}>{on && <XMark />}</CheckBox>;

const Bar = ({ items }) =>
  items.map((it, i) => {
    if (it[0] === "|") return <GripSlot key={i} $w={+it.slice(1)}><GripV /></GripSlot>;
    if (it[0] === "~") return <Gap key={i} $w={+it.slice(1)} />;
    if (it === ">") return <More key={i}>»</More>;
    if (it === "!") return <VLine key={i} />;
    if (it[0] === "v") return <DropSlot key={i} $w={+it.slice(1)}><Tri $c="#999" /></DropSlot>;
    if (it[0] === "V") return <DropSlot key={i} $w={+it.slice(1)}><Tri /></DropSlot>;
    if (it[0] === "*") return <Slot key={i}><ActiveBtn><Icon n={it.slice(1)} /></ActiveBtn></Slot>;
    return <Slot key={i}><Icon n={it} /></Slot>;
  });

const row1 = ["|9", "new", "open", "save", "saveas", "newprint", "composer", "|14", "*selzoom", "hand", "pan", "zoomin", "zoomout", "zoom11", "zoomfull", "zoomsel", "zoomlayer", "zoomlast", "zoomnext", "refresh", "|14", "identify", "gear", "v11", "select", "v13", "deselect", "eps", "table", "abacus", "ruler", "V11", "tip", "annot", "~28", ">", "~8", "|8", "help", ">"];
const row2 = ["|9", "pencils", "pencil", "savegray", "points", "shape", "nodetool", "dashx", "scissors", "copy", "clip", "|13", "abc", "abpin", "abgray", "abceye", "abcarrow", "abcrot", "abcpen", "|14", "db", "~4", "|13", "|13", "stack", "|14", "mapup", "mapstar", "mapminus", "!", "mapplus", "rasterplus", "nodegray", "penmap", "hammer", "mapdash", "mappen"];
const side = ["lv", "lr", "lpg", "lfeather", "lsail", "lrect", "lwms", "lwcs", "lwfs", "lcomma"];
const menus = [["Projekt", 9, 49], ["Bearbeiten", 0, 68], ["Ansicht", 0, 49], ["Layer", 0, 42], ["Einstellungen", 0, 78], ["Erweiterungen", 0, 85], ["Vektor", 0, 45], ["Raster", 0, 47], ["Datenbank", 0, 67], ["Verarbeitung", 0, 76], ["Hilfe", 0, 40]];

const Swatch = () => (
  <RasterSwatch viewBox="0 0 16 16">
    {[[0,0,"#9c9c9c"],[5,0,"#d4d4d4"],[11,0,"#a8a8a8"],[0,5,"#c9c9c9"],[5,5,"#8e8e8e"],[11,5,"#e4e4e4"],[0,11,"#a0a0a0"],[5,11,"#c4c4c4"],[11,11,"#eee"]].map(([x,y,c],i)=>(
      <rect key={i} x={x} y={y} width={x===5?6:5} height={y===5?6:5} fill={c} />
    ))}
  </RasterSwatch>
);

const outline = "M826 358L840 353L851 333L865 332L881 343L891 359L920 358L921 353L925 363L937 380L945 376L963 381L983 398L996 405L1027 408L1046 423L1066 428L1082 443L1097 456L1112 455L1122 445L1137 448L1138 456L1119 463L1096 466L1081 476L1077 496L1081 503L1071 499L1061 516L1026 526L1003 532L970 534L945 549L940 572L920 577L913 589L900 599L880 604L855 600L826 585Z";
const tan = "M826 400L843 380L866 370L883 386L900 400L913 408L925 435L950 438L973 426L1006 413L1032 418L1069 433L1096 459L1079 476L1067 496L1052 513L1003 529L969 532L939 547L921 547L903 546L886 556L873 572L847 569L826 574Z";

const Terrain = () => (
  <RasterSvg viewBox="332 306 816 350">
    <defs>
      <filter id="hs" x="-5%" y="-5%" width="110%" height="110%" colorInterpolationFilters="sRGB">
        <feTurbulence type="fractalNoise" baseFrequency="0.07 0.11" numOctaves="4" seed="7" result="n" />
        <feDiffuseLighting in="n" surfaceScale="2.400" diffuseConstant="1" lightingColor="#dcd5bc" result="l"><feDistantLight azimuth="225" elevation="60" /></feDiffuseLighting>
        <feGaussianBlur in="SourceAlpha" stdDeviation="1.200" result="a" />
        <feComposite in="l" in2="a" operator="in" />
      </filter>
      <filter id="hm" x="-25%" y="-25%" width="150%" height="150%" colorInterpolationFilters="sRGB">
        <feTurbulence type="fractalNoise" baseFrequency="0.06 0.035" numOctaves="4" seed="19" result="n" />
        <feDiffuseLighting in="n" surfaceScale="6" diffuseConstant="1.050" lightingColor="#dcd4ba" result="l"><feDistantLight azimuth="205" elevation="55" /></feDiffuseLighting>
        <feGaussianBlur in="SourceAlpha" stdDeviation="9" result="a" />
        <feComposite in="l" in2="a" operator="in" />
      </filter>
      <filter id="hp" x="-40%" y="-40%" width="180%" height="180%" colorInterpolationFilters="sRGB">
        <feTurbulence type="fractalNoise" baseFrequency="0.09" numOctaves="3" seed="3" result="n" />
        <feDiffuseLighting in="n" surfaceScale="1.300" diffuseConstant="1.120" lightingColor="#f8f3dc" result="l"><feDistantLight azimuth="225" elevation="68" /></feDiffuseLighting>
        <feGaussianBlur in="SourceAlpha" stdDeviation="8" result="a" />
        <feComposite in="l" in2="a" operator="in" />
      </filter>
      <filter id="rough"><feTurbulence type="fractalNoise" baseFrequency="0.12" numOctaves="2" seed="4" /><feDisplacementMap in="SourceGraphic" scale="4" /></filter>
      <clipPath id="clipT"><path d={outline} /></clipPath>
    </defs>
    <path d={outline} fill="#efe9cf" filter="url(#rough)" />
    <path d="M346 462L357 455L367 459L380 454L393 453L393 500L377 490L357 477L348 468Z" fill="#ebe4c8" filter="url(#rough)" />
    <path d="M346 462L357 455L367 459L372 470L385 475L393 480L393 490L375 480L357 472Z" filter="url(#hs)" />
    <g clipPath="url(#clipT)">
      <path d={tan} filter="url(#hs)" />
      <path d="M888 360L923 361L928 371L900 386L891 376Z" filter="url(#hs)" />
      <path d="M953 385L963 385L994 411L994 418L976 415L959 400Z" filter="url(#hs)" />
      <path d="M835 358L850 350L852 358L843 363Z" filter="url(#hs)" />
      <path d="M826 405L843 388L866 380L885 400L900 430L895 465L875 490L850 505L826 515Z" filter="url(#hm)" opacity=".85" />
      <path d="M918 385L950 390L965 418L945 442L920 430Z" filter="url(#hp)" />
    </g>
    <g fill="none" stroke="#6f6650" strokeWidth="1.100" opacity=".75" filter="url(#rough)">
      <path d="M1096 458L1081 477L1076 495L1062 512L1030 522L1004 530L970 530L945 544L922 546L902 542L898 520L885 500" strokeWidth="1.600" />
      <path d="M906 544L900 520L896 498M876 560L865 535L852 515M1003 528L1004 515L990 500L960 490L930 480M1096 458L1040 452L1000 448L965 462M1040 470L1010 485L1000 500M1060 450L1020 435L985 432M975 525L965 505L945 495M925 540L925 515L915 495M1030 515L1025 495L1012 488" />
    </g>
    <g fill="none" stroke="#f6f1da" strokeWidth="1.400" opacity=".75" filter="url(#rough)">
      <path d="M1092 462L1078 480L1073 494M907 540L903 520L899 500M870 566L860 540L848 515L843 480M990 502L960 494L935 484" />
    </g>
  </RasterSvg>
);

export default function App() {
  return (
    <Window>
      <Global />
      <TitleBar>
        <Logo />
        <TitleText>QGIS 2.0.1-Dufour</TitleText>
        <CaptionGroup>
          <CaptionBtn $first $w={29}><svg width="11" height="5"><rect x=".5" y=".5" width="10" height="4" fill="#eee" stroke="#555" /></svg></CaptionBtn>
          <CaptionBtn $w={27}><svg width="12" height="10"><rect x="1" y="1" width="10" height="8" fill="none" stroke="#eee" strokeWidth="2" /></svg></CaptionBtn>
          <CaptionBtn $w={46}><CaptionGlyph $s={15}>X</CaptionGlyph></CaptionBtn>
        </CaptionGroup>
      </TitleBar>
      <Client>
        <MenuBar>
          {menus.map(([t, x, w]) => <MenuItem key={t} $x={x} $w={w}>{t}</MenuItem>)}
        </MenuBar>
        <Toolbar><Bar items={row1} /></Toolbar>
        <Toolbar><Bar items={row2} /></Toolbar>
        <Main>
          <SideBar>
            <GripH />
            {side.map((n) => <SideSlot key={n}><Icon n={n} /></SideSlot>)}
            <SideSlot $drop><Icon n="lnew" /><Tri $s={5} /></SideSlot>
            <SideSlot><Icon n="lrem" /></SideSlot>
            <GripH $m="9px auto 0" />
            <SideSlot $h={30}><Icon n="notes" /></SideSlot>
          </SideBar>
          <Dock>
            <DockHead>
              <GripFill $w={84} />
              <DockTitle>Layer</DockTitle>
              <GripFill $w={84} />
              <DockBtn $ml={0}>
                <svg width="10" height="9"><path d="M3 3V.5h6.500V6H7M.5 3h6.500v5.500H.5z" fill="none" stroke="#111" /></svg>
              </DockBtn>
              <DockBtn><svg width="9" height="9"><path d="M1 1l7 7M8 1L1 8" stroke="#111" strokeWidth="1.200" /></svg></DockBtn>
            </DockHead>
            <Tree>
              <TreeRow>
                <TreeGuide><Gap $w={7} /><Dotted /></TreeGuide>
                <Box on />
                <Swatch />
                <TreeLabel $u>relief</TreeLabel>
              </TreeRow>
              <TreeRow>
                <TreeGuide><Expander /><Dotted /></TreeGuide>
                <Box on />
                <Swatch />
                <TreeLabel>atlantgis_dgm</TreeLabel>
              </TreeRow>
            </Tree>
            <Tabs>
              <Tab $on>Layer</Tab>
              <Tab>Browser</Tab>
            </Tabs>
          </Dock>
          <Splitter><SplitDots /></Splitter>
          <MapCanvas>
            <Raster><Terrain /></Raster>
          </MapCanvas>
        </Main>
        <StatusBar>
          <Stat $w={22}>
            <svg width="16" height="17" viewBox="0 0 16 17"><path d="M3 3c3-2 8 0 8 4s-6 2-7 5c0 3 6 4 9 1" fill="none" stroke="#333" strokeWidth="2.400" /><path d="M2 15L14 2" stroke="#888" /></svg>
          </Stat>
          <Stat $w={66}>Koordinate:</Stat>
          <Stat $w={302} $bg="#fff">547127,3961950</Stat>
          <Stat $w={53}>Maßstab</Stat>
          <Stat $w={85} $bg="#fff" $j="flex-start" $p="0 0 0 6px">1:530719<ComboTail><Tri /></ComboTail></Stat>
          <Stat $w={21}>
            <svg width="17" height="18" viewBox="0 0 17 18"><path d="M4 17L15 3" stroke="#888" strokeWidth="2.500" /><circle cx="7" cy="7" r="5" fill="#fff" stroke="#c8202a" strokeWidth="2" /><path d="M3.500 10.500l7-7" stroke="#c8202a" strokeWidth="1.500" /></svg>
          </Stat>
          <Stat $w={72} $j="flex-start" $p="0 0 0 4px"><Box on />Zeichnen</Stat>
          <Stat $w={67} $c="#999">EPSG:32628</Stat>
          <Stat $w={24}>
            <svg width="18" height="18" viewBox="0 0 18 18"><circle cx="9" cy="9" r="8" fill="#c4c4c4" stroke="#8a8a8a" /><circle cx="9" cy="9" r="4" fill="#f0f0f0" stroke="#8a8a8a" /><path d="M9 1v16M1 9h16" stroke="#8a8a8a" /></svg>
          </Stat>
          <Stat $w={22}>
            <svg width="16" height="15" viewBox="0 0 16 15"><path d="M8 1l7 13H1z" fill="#f6ec9a" stroke="#8d8a5f" /><path d="M8 5v5M8 11v2" stroke="#444" strokeWidth="1.500" /></svg>
          </Stat>
          <ResizeGrip />
        </StatusBar>
      </Client>

      <Dialog>
        <DialogTitle>
          <Logo mt={6} />
          <DialogTitleText>Transformieren (Reprojizieren)</DialogTitleText>
          <DlgButtons>
            <DlgBtn $w={28} $bg="linear-gradient(#c7c7c7,#8f8f8f)"><CaptionGlyph $s={14}>?</CaptionGlyph></DlgBtn>
            <DlgBtn $w={46} $bg="linear-gradient(#dc8c80,#b32c20 55%,#c9584a)"><CaptionGlyph $s={15}>X</CaptionGlyph></DlgBtn>
          </DlgButtons>
        </DialogTitle>
        <DialogBody>
          <Form>
            <FullRow><Box />Stapelverarbeitungsmodus (zur Bearbeitung eines ganzen Verzeichnisses)</FullRow>
            <Row $mt={8}>
              <span>Eingabedatei</span>
              <Cell><Field>relief<ArrowBox><Tri /></ArrowBox></Field><PushBtn>Wählen...</PushBtn></Cell>
            </Row>
            <Row $mt={8}>
              <span>Ausgabedatei</span>
              <Cell><Field $pl={0}><RightText>jangsdaten/raster/relief_null.tif</RightText></Field><PushBtn $def>Wählen...</PushBtn></Cell>
            </Row>
            <Row $mt={10}>
              <CheckLabel><Box on />Eingabe-KBS</CheckLabel>
              <Cell><Field>EPSG:32628</Field><PushBtn>Wählen...</PushBtn></Cell>
            </Row>
            <Row $mt={10}>
              <CheckLabel><Box />Ziel-KBS</CheckLabel>
              <Cell><Field $off /><PushBtn $off>Wählen...</PushBtn></Cell>
            </Row>
            <Row $mt={8}>
              <CheckLabel><Box />Abtastmethode</CheckLabel>
              <Cell><Field $off>Nah<ArrowBox><Tri $c="#777" /></ArrowBox></Field></Cell>
            </Row>
            <Row $mt={5}>
              <CheckLabel><Box on />Leerwerte</CheckLabel>
              <Cell><Field>0</Field></Cell>
            </Row>
            <Row $mt={6}>
              <CheckLabel><Box />Maskenlayer</CheckLabel>
              <Cell><Field $off><ArrowBox><Tri $c="#777" /></ArrowBox></Field><PushBtn $off>Wählen...</PushBtn></Cell>
            </Row>
            <Row $mt={6}>
              <CheckLabel><Box />Speicher für Caching</CheckLabel>
              <Cell><Field $off>20MB<SpinBox><TriUp $c="#777" /><Tri $c="#777" /></SpinBox></Field></Cell>
            </Row>
            <Group>
              <Legend><Box />Größe ändern</Legend>
              <GroupRow>
                <GroupLabel $w={36}>Breite</GroupLabel>
                <SmallSpin $off>3000<SpinBox><TriUp $c="#777" /><Tri $c="#777" /></SpinBox></SmallSpin>
                <Gap $w={46} />
                <GroupLabel $w={33}>Höhe</GroupLabel>
                <SmallSpin $off>3000<SpinBox><TriUp $c="#777" /><Tri $c="#777" /></SpinBox></SmallSpin>
              </GroupRow>
            </Group>
            <FullRow $mt={9}><Box />Parallele Entzerrungsimplementation verwenden</FullRow>
          </Form>
          <Lower>
            <FullRow $mt={10}><Box on />Nach Abschluss zur Karte hinzufügen</FullRow>
            <ConsoleRow>
              <Console>{"gdalwarp -s_srs EPSG:32628 -dstnodata 0 -of GTiff\nC:/tobias/Vortraege/QGIS_WS_Tuebingen/Daten/Ausgangsdaten/tiff/reli\nef.tif\nC:/tobias/Vortraege/QGIS_WS_Tuebingen/Daten/Franz/Ausgangsdaten/\nraster/relief_null.tif"}</Console>
              <ConsoleSide>
                <SideBtn><svg width="16" height="18" viewBox="0 0 16 18"><path d="M3 17l1-6 7-10 3 2-7 10z" fill="#eea936" stroke="#d18a1c" /><path d="M3 17l6-2" stroke="#ddd" /></svg></SideBtn>
                <SideBtn><svg width="16" height="16" viewBox="0 0 16 16"><circle cx="8" cy="8" r="6.500" fill="#d6d6d6" stroke="#b0b0b0" /><circle cx="8" cy="8" r="3.500" fill="#f4f4f4" stroke="#aaa" /></svg></SideBtn>
              </ConsoleSide>
            </ConsoleRow>
            <BtnBar>
              <PushBtn $h={23}>OK</PushBtn>
              <PushBtn $h={23}>Schließen</PushBtn>
              <PushBtn $h={23}>Hilfe</PushBtn>
            </BtnBar>
          </Lower>
        </DialogBody>
      </Dialog>
    </Window>
  );
}
